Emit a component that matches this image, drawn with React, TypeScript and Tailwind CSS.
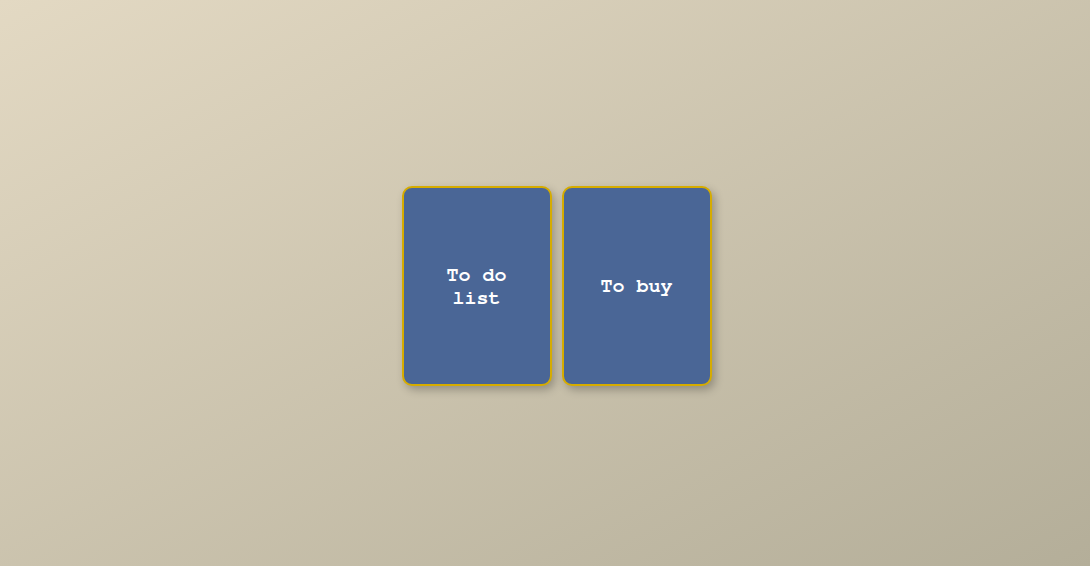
const cards = [
  { id: 1, title: "To do list" },
  { id: 2, title: "To buy" },
];

export default function App() {
  return (
    <div className="w-full h-[566px] bg-gradient-to-br from-[#e3d9c3] to-[#b4ae99] flex items-center justify-center">
      <div className="flex gap-[10px] ml-[23px] mt-[5px]">
        {cards.map((card) => (
          <div
            key={card.id}
            className="w-[150px] h-[200px] rounded-[10px] border-2 border-[#d6ac00] bg-[#4a6696] shadow-[3px_4px_8px_rgba(0,0,0,0.25)] flex items-center justify-center px-[20px] pt-[2px] text-center"
          >
            <span className="text-white font-bold text-[20px] leading-[23px] font-['Nimbus_Mono_PS','FreeMono','Courier_10_Pitch','Courier_New','Liberation_Mono',monospace]">
              {card.title}
            </span>
          </div>
        ))}
      </div>
    </div>
  );
}
